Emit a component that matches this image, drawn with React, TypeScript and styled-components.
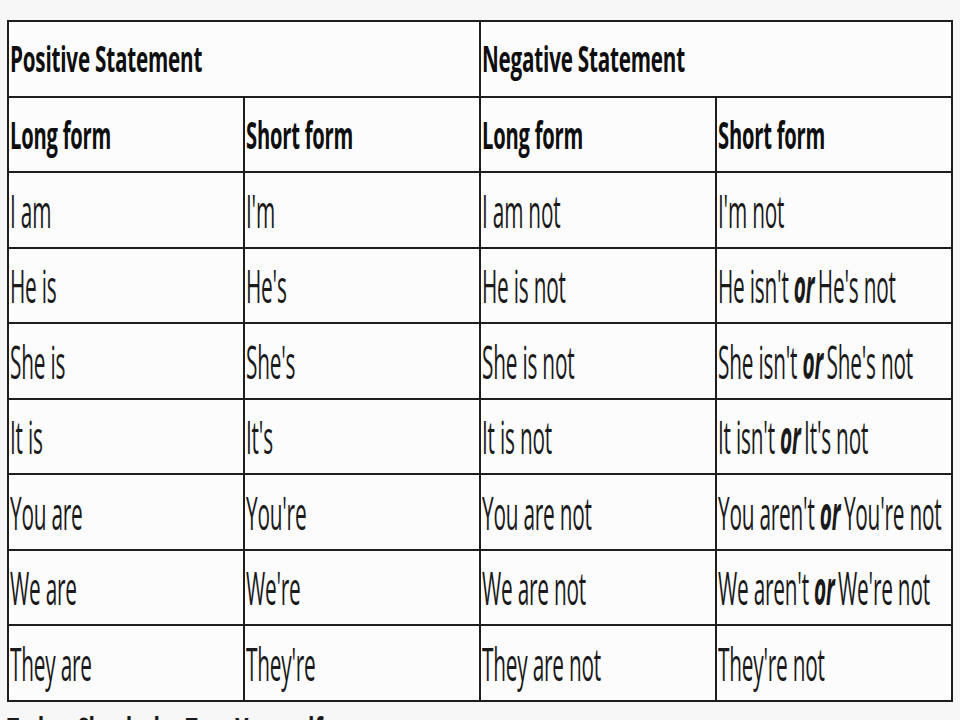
import styled, { createGlobalStyle } from 'styled-components'

const GlobalStyle = createGlobalStyle`
  html, body {
    margin: 0;
    padding: 0;
    background: #f7f7f7;
    overflow: hidden;
  }
  body {
    font-family: "Open Sans", "DejaVu Sans", sans-serif;
    color: #1a1a1a;
  }
`

const Page = styled.div`
  width: 960px;
  height: 720px;
  overflow: hidden;
  padding: 20px 0 0 7px;
  box-sizing: border-box;
`

const Table = styled.table`
  width: 946px;
  border-collapse: collapse;
  table-layout: fixed;
  background: #fcfcfc;
  border: 2px solid #1e1e1e;
`

const Row = styled.tr`
  height: 75.5px;
`

const Cell = styled.td`
  border: 2px solid #1e1e1e;
  padding: 0 0 0 1px;
  vertical-align: middle;
  overflow: hidden;
  white-space: nowrap;
`

const Text = styled.span<{ $size: number; $scale: number; $bold?: boolean }>`
  display: inline-block;
  font-size: ${({ $size }) => $size}px;
  font-weight: ${({ $bold }) => ($bold ? 700 : 400)};
  color: ${({ $bold }) => ($bold ? '#0e0e0e' : '#1a1a1a')};
  line-height: 1;
  letter-spacing: -0.01em;
  transform: scaleX(${({ $scale }) => $scale});
  transform-origin: left center;
`

const Or = styled.em`
  font-weight: 700;
  font-style: italic;
  margin-right: -0.08em;
`

const Footer = styled.div`
  margin-top: 9px;
  font-size: 44px;
  font-weight: 700;
  line-height: 1;
  white-space: nowrap;
  transform: scaleX(0.48);
  transform-origin: left top;
`

const rows: [string, string, string, [string, string] | string][] = [
  ['I am', "I'm", 'I am not', "I'm not"],
  ['He is', "He's", 'He is not', ["He isn't", "He's not"]],
  ['She is', "She's", 'She is not', ["She isn't", "She's not"]],
  ['It is', "It's", 'It is not', ["It isn't", "It's not"]],
  ['You are', "You're", 'You are not', ["You aren't", "You're not"]],
  ['We are', "We're", 'We are not', ["We aren't", "We're not"]],
  ['They are', "They're", 'They are not', "They're not"]
]

const Body = ({ children }: { children: React.ReactNode }) => (
  <Text $size={46} $scale={0.452}>
    {children}
  </Text>
)

export default function App() {
  return (
    <Page>
      <GlobalStyle />
      <Table>
        <tbody>
          <Row>
            <Cell colSpan={2}>
              <Text $size={35} $scale={0.59} $bold>
                Positive Statement
              </Text>
            </Cell>
            <Cell colSpan={2}>
              <Text $size={35} $scale={0.59} $bold>
                Negative Statement
              </Text>
            </Cell>
          </Row>
          <Row>
            {['Long form', 'Short form', 'Long form', 'Short form'].map((h, i) => (
              <Cell key={i}>
                <Text $size={38} $scale={0.53} $bold>
                  {h}
                </Text>
              </Cell>
            ))}
          </Row>
          {rows.map(([a, b, c, d]) => (
            <Row key={a}>
              <Cell>
                <Body>{a}</Body>
              </Cell>
              <Cell>
                <Body>{b}</Body>
              </Cell>
              <Cell>
                <Body>{c}</Body>
              </Cell>
              <Cell>
                <Body>
                  {typeof d === 'string' ? (
                    d
                  ) : (
                    <>
                      {d[0]} <Or>or</Or> {d[1]}
                    </>
                  )}
                </Body>
              </Cell>
            </Row>
          ))}
        </tbody>
      </Table>
      <Footer>To be: Check the Test Yourself</Footer>
    </Page>
  )
}
